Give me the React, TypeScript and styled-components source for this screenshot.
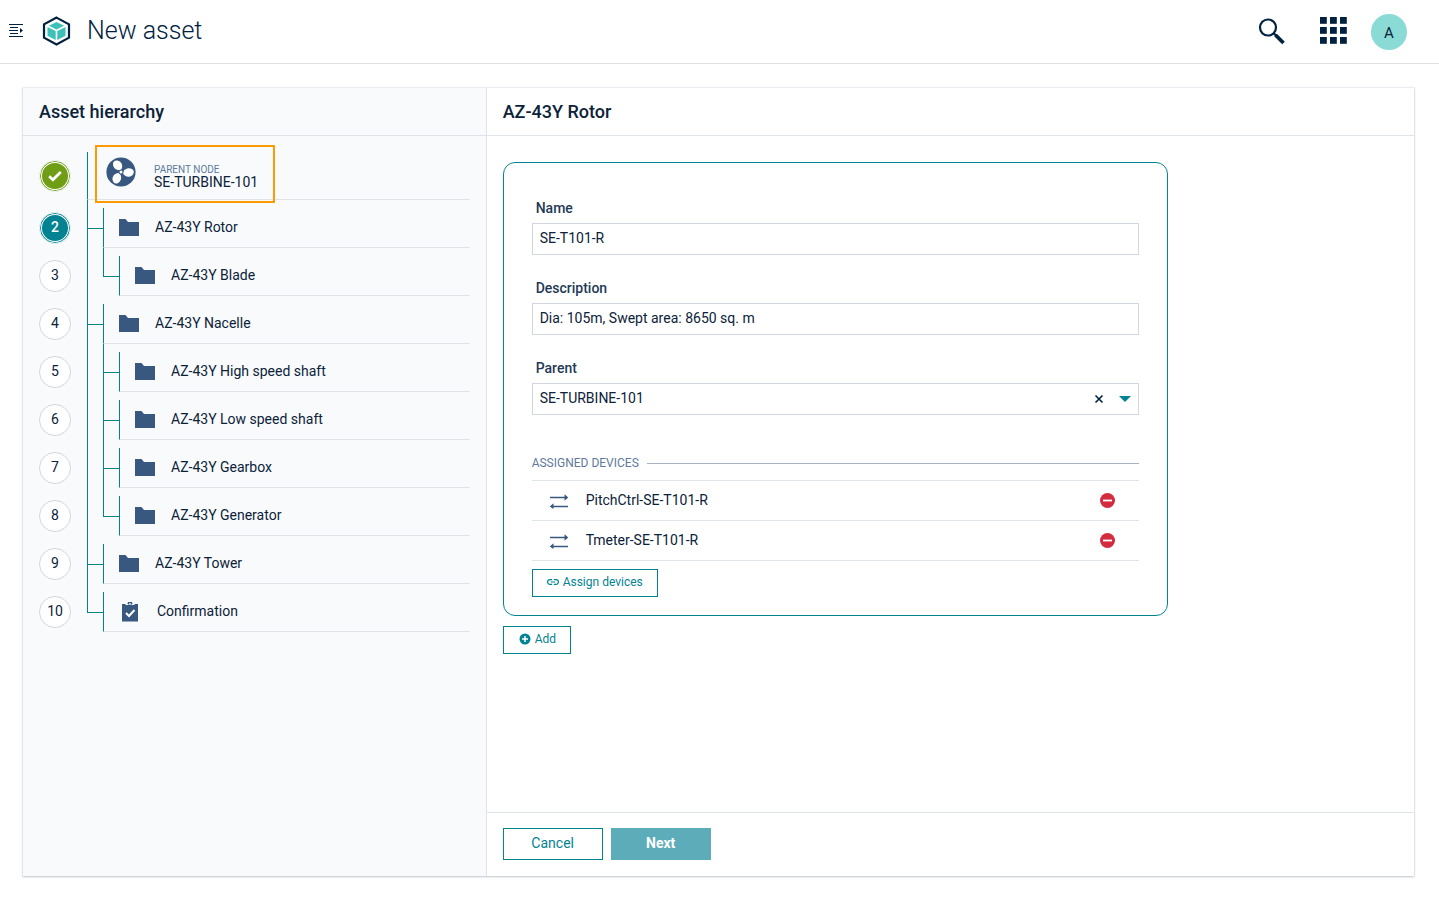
import React from 'react';
import styled, { createGlobalStyle } from 'styled-components';

const c = {
  ink: '#0b2239',
  navy: '#00213f',
  slate: '#38587f',
  muted: '#5f7a9d',
  teal: '#038391',
  line: '#dfe3ea',
  field: '#d0d7e2',
  side: '#f9fafc',
};

const Global = createGlobalStyle`
  *, *::before, *::after { box-sizing: border-box; }
  body { margin: 0; background: #fff; color: ${c.ink}; font: 14px/20px Roboto, "Liberation Sans", sans-serif; }
  button, input, select { font: inherit; color: inherit; }
  svg { display: block; flex: none; }
`;

const Page = styled.div`
  min-height: 100vh;
  display: flex;
  flex-direction: column;
`;

const Header = styled.header`
  height: 64px;
  display: flex;
  align-items: center;
  padding: 0 32px 2px 8px;
  border-bottom: 1px solid #dfe1e4;
`;

const IconButton = styled.button`
  display: grid;
  place-items: center;
  padding: 0;
  border: 0;
  background: none;
  cursor: pointer;
`;

const Logo = styled.a`
  margin: 0 16px 0 18px;
`;

const AppTitle = styled.h1`
  margin: 0;
  flex: 1;
  font-size: 25px;
  line-height: 32px;
  font-weight: 300;
  color: ${c.navy};
`;

const Actions = styled.div`
  display: flex;
  align-items: center;
  gap: 34px;
`;

const Avatar = styled.button`
  width: 36px;
  height: 36px;
  margin: 2px 0 0 -10px;
  padding: 2px 0 0;
  border: 0;
  border-radius: 50%;
  background: #8adbd5;
  font-size: 15px;
  cursor: pointer;
`;

const Content = styled.main`
  flex: 1;
  display: flex;
  padding: 24px 25px 24px 23px;
`;

const Card = styled.div`
  flex: 1;
  display: grid;
  grid-template-columns: minmax(0, 1fr) minmax(0, 2fr);
  box-shadow: 0 0 1px 1px rgba(40, 70, 100, 0.08), 0 1px 2px rgba(20, 40, 60, 0.2);
`;

const Side = styled.aside`
  background: ${c.side};
  border-right: 1px solid ${c.line};
`;

const Detail = styled.section`
  display: flex;
  flex-direction: column;
  background: #fff;
`;

const PanelTitle = styled.h2`
  margin: 0;
  padding: 12px 16px 11px;
  border-bottom: 1px solid ${c.line};
  font-size: 18px;
  line-height: 24px;
  font-weight: 500;
`;

const Tree = styled.ol`
  list-style: none;
  margin: 0;
  padding: 16px;
`;

const TreeRow = styled.li`
  display: flex;
  height: 48px;
`;

const StepCell = styled.div<{ $first?: boolean }>`
  width: 48px;
  padding-top: ${p => (p.$first ? 0 : 8)}px;
  display: flex;
  align-items: center;
`;

const Step = styled.span<{ $tone?: string }>`
  display: grid;
  place-items: center;
  width: 32px;
  height: 32px;
  padding-bottom: 3px;
  border-radius: 50%;
  line-height: 20px;
  border: 1px solid ${p => (p.$tone ? c.side : c.field)};
  color: ${p => (p.$tone ? '#fff' : c.ink)};
  font-weight: ${p => (p.$tone ? 500 : 400)};
  background: ${p => p.$tone || '#fff'};
  box-shadow: ${p => (p.$tone ? `inset 0 0 0 1px ${p.$tone}, inset 0 0 0 2px #fff` : 'none')};
`;

const Guide = styled.span`
  width: 16px;
  display: flex;
  flex-direction: column;
`;

const GuideTop = styled.span<{ $branch: boolean }>`
  height: 29px;
  border-left: 1px solid ${c.teal};
  border-bottom: ${p => (p.$branch ? `1px solid ${c.teal}` : '0')};
`;

const GuideRest = styled.span<{ $on: boolean }>`
  flex: 1;
  border-left: ${p => (p.$on ? `1px solid ${c.teal}` : '0')};
`;

const NodeBody = styled.div<{ $first?: boolean }>`
  position: relative;
  flex: 1;
  display: flex;
  align-items: center;
  margin-top: ${p => (p.$first ? 0 : 8)}px;
  padding-left: ${p => (p.$first ? 18 : 15)}px;
  padding-bottom: ${p => (p.$first ? 8 : 0)}px;
  gap: ${p => (p.$first ? 18 : 16)}px;
  border-left: 1px solid ${c.teal};
  border-bottom: 1px solid ${c.line};
`;

const NodeIcon = styled.span<{ $wide?: boolean }>`
  width: ${p => (p.$wide ? 22 : 20)}px;
  display: flex;
  justify-content: center;
`;

const NodeName = styled.span`
  padding-bottom: 2px;
`;

const ParentText = styled.div`
  padding-top: 10px;
  line-height: 14px;
`;

const Caption = styled.div`
  font-size: 10px;
  line-height: 11px;
  color: ${c.muted};
`;

const Highlight = styled.span`
  position: absolute;
  top: -7px;
  left: 7px;
  width: 180px;
  height: 58px;
  border: 2px solid #ff9a02;
  pointer-events: none;
`;

const Body = styled.div`
  flex: 1;
  padding: 26px 16px;
`;

const Group = styled.form`
  width: calc(75% - 6px);
  padding: 35px 28px 18px;
  border: 1px solid ${c.teal};
  border-radius: 12px;
  margin-bottom: 10px;
`;

const Field = styled.div`
  margin-bottom: 23px;
`;

const Label = styled.label`
  display: block;
  padding: 0 4px 5px;
  font-weight: 500;
  color: #1f3a56;
`;

const Control = styled.div`
  display: flex;
  height: 32px;
  border: 1px solid ${c.field};
  padding-right: 7px;
  align-items: center;
  gap: 15px;
`;

const TextInput = styled.input`
  flex: 1;
  min-width: 0;
  height: 30px;
  padding: 0 7px 2px;
  border: 0;
  background: none;
`;

const Select = styled.select`
  flex: 1;
  appearance: none;
  height: 30px;
  padding: 0 7px 2px;
  border: 0;
  background: none;
`;

const Legend = styled.h3`
  display: flex;
  align-items: center;
  gap: 8px;
  margin: 38px 0 7px;
  font-size: 12px;
  line-height: 20px;
  font-weight: 400;
  color: ${c.muted};
  &::after { content: ''; flex: 1; border-top: 1px solid #a9b4c2; }
`;

const Devices = styled.ul`
  list-style: none;
  margin: 0 0 8px;
  padding: 0;
  border-top: 1px solid ${c.line};
`;

const Device = styled.li`
  display: flex;
  align-items: center;
  height: 40px;
  padding: 0 24px 0 17px;
  gap: 17px;
  border-bottom: 1px solid ${c.line};
`;

const DeviceName = styled.span`
  flex: 1;
  padding-bottom: 2px;
`;

const Button = styled.button<{ $size?: 'sm'; $primary?: boolean }>`
  display: inline-flex;
  align-items: center;
  justify-content: center;
  gap: 4px;
  height: ${p => (p.$size ? 28 : 32)}px;
  min-width: ${p => (p.$size ? 0 : 100)}px;
  padding: 0 ${p => (p.$size ? 14 : 16)}px 3px;
  font-size: ${p => (p.$size ? 12 : 14)}px;
  font-weight: ${p => (p.$primary ? 700 : 400)};
  color: ${p => (p.$primary ? '#fff' : c.teal)};
  background: ${p => (p.$primary ? '#5dacb9' : '#fff')};
  border: 1px solid ${p => (p.$primary ? '#5dacb9' : c.teal)};
  cursor: pointer;
`;

const Footer = styled.footer`
  display: flex;
  gap: 8px;
  padding: 15px 16px 16px;
  border-top: 1px solid ${c.line};
`;

const MenuIcon = () => (
  <svg width="16" height="16" viewBox="0 1 16 16" fill="none" stroke={c.navy} strokeWidth="1" aria-hidden="true">
    <path d="M1 2.500h14M2 5.500h8M1 8.500h9M2 11.500h8M1 14.500h14" />
    <path d="M12 6l3 2.500-3 2.500z" fill={c.navy} stroke="none" />
  </svg>
);

const LogoIcon = () => (
  <svg width="29" height="30" viewBox="0 0 29 30" aria-hidden="true">
    <path d="M14.500 1.600L27 8.400v13.200l-12.500 6.800L2 21.600V8.400z" fill="none" stroke={c.navy} strokeWidth="2.200" />
    <path d="M14.500 6l7.600 3.700-7.600 3.800-7.600-3.800z" fill="#3cc1b8" />
    <path d="M5.500 11l8.200 4.100v9l-8.200-4.400zM23.500 11l-8.200 4.100v9l8.200-4.400z" fill="#3cc1b8" />
  </svg>
);

const SearchIcon = () => (
  <svg width="28" height="28" viewBox="0 -1 28 28" fill="none" stroke={c.navy} aria-hidden="true">
    <circle cx="10" cy="9.500" r="8" strokeWidth="2.200" />
    <path d="M15.500 15l3 3" strokeWidth="2.200" />
    <path d="M17.500 17l8 8" strokeWidth="3.800" />
  </svg>
);

const GridIcon = () => (
  <svg width="27" height="27" viewBox="0 0 27 27" fill={c.navy} aria-hidden="true">
    {[0, 10, 20].map(y => [0, 10, 20].map(x => <rect key={`${x}-${y}`} x={x} y={y} width="6.800" height="6.800" />))}
  </svg>
);

const FolderIcon = () => (
  <svg width="20" height="18" viewBox="0 0 20 18" fill={c.slate} aria-hidden="true">
    <path d="M0 0h6.500l2.500 3h11v14H0z" />
  </svg>
);

const ClipboardIcon = () => (
  <svg width="16" height="20" viewBox="0 0 16 20" aria-hidden="true">
    <path d="M0 2h5.500a2.500 2.500 0 0 1 5 0H16v17.500H0z" fill={c.slate} />
    <path d="M3.500 2.500h3M9.500 2.500h3" stroke={c.side} strokeWidth="1" />
    <circle cx="8" cy="2" r="0.900" fill={c.side} />
    <path d="M4 11l3 3 5.500-6" fill="none" stroke="#fff" strokeWidth="2" />
  </svg>
);

const FanIcon = () => (
  <svg width="30" height="30" viewBox="0 0 30 30" aria-hidden="true">
    <circle cx="15" cy="15" r="14.600" fill={c.slate} />
    {[0, 120, 240].map(a => (
      <path key={a} transform={`rotate(${a} 15 15)`} fill="#fff"
        d="M14 13.200C9.400 13.600 6.600 9.800 7 6.500C7.300 4 9.300 3 11.400 3.500C15.600 4.400 17.600 8.800 15.200 12.800z" />
    ))}
    <circle cx="15" cy="15" r="2.500" fill={c.slate} />
    <circle cx="15" cy="15" r="1.500" fill="#fff" />
  </svg>
);

const CheckIcon = () => (
  <svg width="14" height="14" viewBox="0 -2 14 14" fill="none" stroke="#fff" strokeWidth="2.800" aria-hidden="true">
    <path d="M1.200 6.200l3.700 3.500L12.800 1.900" />
  </svg>
);

const SwapIcon = () => (
  <svg width="20" height="16" viewBox="0 0 20 16" aria-hidden="true">
    <path d="M1 4.500h15M4 13.500h15" stroke={c.slate} strokeWidth="1.400" />
    <path d="M15.500 1.300l3.800 3.200-3.800 3.200zM4.500 10.300L.700 13.500l3.800 2.500z" fill={c.slate} />
  </svg>
);

const RemoveIcon = () => (
  <svg width="15" height="15" viewBox="0 0 15 15" aria-hidden="true">
    <circle cx="7.500" cy="7.500" r="7.500" fill="#d32c3f" />
    <rect x="3" y="6.600" width="9" height="1.800" fill="#fff" />
  </svg>
);

const LinkIcon = () => (
  <svg width="12" height="8" viewBox="0 0 12 8" fill="none" stroke={c.teal} strokeWidth="1.200" aria-hidden="true">
    <path d="M5.200 1.600H3a2.400 2.400 0 0 0 0 4.800h2.200M6.800 1.600H9a2.400 2.400 0 0 1 0 4.800H6.800M3.700 4h4.600" />
  </svg>
);

const PlusIcon = () => (
  <svg width="13" height="12" viewBox="0 0 13 12" aria-hidden="true">
    <circle cx="7" cy="6" r="5.500" fill={c.teal} />
    <path d="M7 3v6M4 6h6" stroke="#fff" strokeWidth="1.500" />
  </svg>
);

const ClearIcon = () => (
  <svg width="10" height="10" viewBox="0 0 10 10" stroke={c.navy} strokeWidth="1.600" aria-hidden="true">
    <path d="M1.500 1.500l7 7M8.500 1.500l-7 7" />
  </svg>
);

const Caret = () => (
  <svg width="12" height="6" viewBox="0 0 12 6" fill={c.teal} aria-hidden="true">
    <path d="M0 0h12L6 6z" />
  </svg>
);

type GuideKind = 'line' | 'tee' | 'elbow';
type TreeNode = { step: number; name: string; guides: GuideKind[]; confirm?: boolean };

const nodes: TreeNode[] = [
  { step: 2, name: 'AZ-43Y Rotor', guides: ['tee'] },
  { step: 3, name: 'AZ-43Y Blade', guides: ['line', 'elbow'] },
  { step: 4, name: 'AZ-43Y Nacelle', guides: ['tee'] },
  { step: 5, name: 'AZ-43Y High speed shaft', guides: ['line', 'tee'] },
  { step: 6, name: 'AZ-43Y Low speed shaft', guides: ['line', 'tee'] },
  { step: 7, name: 'AZ-43Y Gearbox', guides: ['line', 'tee'] },
  { step: 8, name: 'AZ-43Y Generator', guides: ['line', 'elbow'] },
  { step: 9, name: 'AZ-43Y Tower', guides: ['tee'] },
  { step: 10, name: 'Confirmation', guides: ['elbow'], confirm: true },
];

const devices = ['PitchCtrl-SE-T101-R', 'Tmeter-SE-T101-R'];

export default function App() {
  return (
    <>
      <Global />
      <Page>
        <Header>
          <IconButton aria-label="Toggle navigation"><MenuIcon /></IconButton>
          <Logo href="#" aria-label="Home"><LogoIcon /></Logo>
          <AppTitle>New asset</AppTitle>
          <Actions>
            <IconButton aria-label="Search"><SearchIcon /></IconButton>
            <IconButton aria-label="Applications"><GridIcon /></IconButton>
            <Avatar aria-label="Account">A</Avatar>
          </Actions>
        </Header>
        <Content>
          <Card>
            <Side>
              <PanelTitle>Asset hierarchy</PanelTitle>
              <Tree>
                <TreeRow>
                  <StepCell $first><Step $tone="#6f9e16"><CheckIcon /></Step></StepCell>
                  <NodeBody $first>
                    <FanIcon />
                    <ParentText>
                      <Caption>PARENT NODE</Caption>
                      SE-TURBINE-101
                    </ParentText>
                    <Highlight />
                  </NodeBody>
                </TreeRow>
                {nodes.map(n => (
                  <TreeRow key={n.step}>
                    <StepCell><Step $tone={n.step === 2 ? c.teal : undefined}>{n.step}</Step></StepCell>
                    {n.guides.map((g, i) => (
                      <Guide key={i}>
                        <GuideTop $branch={g !== 'line'} />
                        <GuideRest $on={g !== 'elbow'} />
                      </Guide>
                    ))}
                    <NodeBody>
                      <NodeIcon $wide={n.confirm}>{n.confirm ? <ClipboardIcon /> : <FolderIcon />}</NodeIcon>
                      <NodeName>{n.name}</NodeName>
                    </NodeBody>
                  </TreeRow>
                ))}
              </Tree>
            </Side>
            <Detail>
              <PanelTitle>AZ-43Y Rotor</PanelTitle>
              <Body>
                <Group onSubmit={e => e.preventDefault()}>
                  <Field>
                    <Label htmlFor="name">Name</Label>
                    <Control><TextInput id="name" defaultValue="SE-T101-R" /></Control>
                  </Field>
                  <Field>
                    <Label htmlFor="description">Description</Label>
                    <Control><TextInput id="description" defaultValue="Dia: 105m, Swept area: 8650 sq. m" /></Control>
                  </Field>
                  <Field>
                    <Label htmlFor="parent">Parent</Label>
                    <Control>
                      <Select id="parent"><option>SE-TURBINE-101</option></Select>
                      <IconButton type="button" aria-label="Clear parent"><ClearIcon /></IconButton>
                      <Caret />
                    </Control>
                  </Field>
                  <Legend>ASSIGNED DEVICES</Legend>
                  <Devices>
                    {devices.map(d => (
                      <Device key={d}>
                        <SwapIcon />
                        <DeviceName>{d}</DeviceName>
                        <IconButton type="button" aria-label={`Remove ${d}`}><RemoveIcon /></IconButton>
                      </Device>
                    ))}
                  </Devices>
                  <Button type="button" $size="sm"><LinkIcon />Assign devices</Button>
                </Group>
                <Button type="button" $size="sm"><PlusIcon />Add</Button>
              </Body>
              <Footer>
                <Button type="button">Cancel</Button>
                <Button type="button" $primary>Next</Button>
              </Footer>
            </Detail>
          </Card>
        </Content>
      </Page>
    </>
  );
}
